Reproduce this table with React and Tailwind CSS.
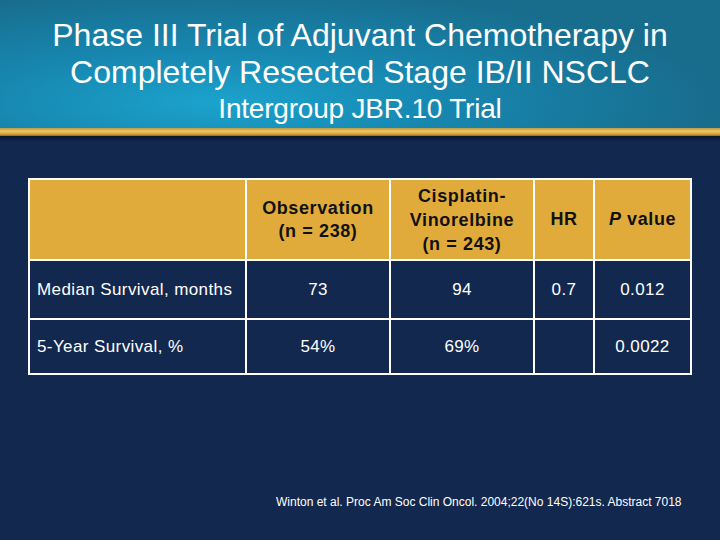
import React from "react";

const font = { fontFamily: '"Liberation Sans", Arial, sans-serif' };

function HeadCell({ children, className = "" }) {
  return (
    <div className={"bg-[#e1ab3b] flex items-center justify-center text-center font-bold text-[18px] leading-[23px] tracking-[0.6px] text-[#111] " + className}>
      {children}
    </div>
  );
}

function Cell({ children, left }) {
  return (
    <div className={"bg-[#13284f] flex items-center text-white text-[17px] tracking-[0.4px] " + (left ? "justify-start pl-[7px]" : "justify-center")}>
      {children}
    </div>
  );
}

export default function App() {
  return (
    <div className="w-[720px] h-[540px] bg-[#13284f] overflow-hidden relative" style={font}>
      <div className="h-[128px] bg-[radial-gradient(ellipse_70%_90%_at_30%_80%,#1ba3cd_0%,#1787b0_45%,#186c8c_100%)] flex flex-col items-center pt-[17px] text-white">
        <div className="text-[32px] leading-[37px]">Phase III Trial of Adjuvant Chemotherapy in</div>
        <div className="text-[32px] leading-[37px]">Completely Resected Stage IB/II NSCLC</div>
        <div className="text-[28px] leading-[34px] tracking-[-0.2px] mt-[1px]">Intergroup JBR.10 Trial</div>
      </div>
      <div className="h-[8px] bg-[linear-gradient(to_bottom,#b79a4f,#f0c65a_40%,#d9a43a_75%,#8a6a2a)]"></div>
      <div className="h-[6px] bg-[linear-gradient(to_bottom,#0a1530,#13284f)]"></div>

      <div className="ml-[28px] mt-[36px] w-[664px] bg-white p-[2px] grid grid-cols-[215px_142px_142px_58px_95px] grid-rows-[79px_57px_53px] gap-[2px]">
        <HeadCell />
        <HeadCell>
          <div>Observation<br />(n = 238)</div>
        </HeadCell>
        <HeadCell className="leading-[24px]">
          <div>Cisplatin-<br />Vinorelbine<br />(n = 243)</div>
        </HeadCell>
        <HeadCell>HR</HeadCell>
        <HeadCell>
          <span><i>P</i> value</span>
        </HeadCell>

        <Cell left>Median Survival, months</Cell>
        <Cell>73</Cell>
        <Cell>94</Cell>
        <Cell>0.7</Cell>
        <Cell>0.012</Cell>

        <Cell left>5-Year Survival, %</Cell>
        <Cell>54%</Cell>
        <Cell>69%</Cell>
        <Cell></Cell>
        <Cell>0.0022</Cell>
      </div>

      <div className="absolute left-[276px] top-[495px] text-white text-[12px] leading-[14px]">
        Winton et al. Proc Am Soc Clin Oncol. 2004;22(No 14S):621s. Abstract 7018
      </div>
    </div>
  );
}
